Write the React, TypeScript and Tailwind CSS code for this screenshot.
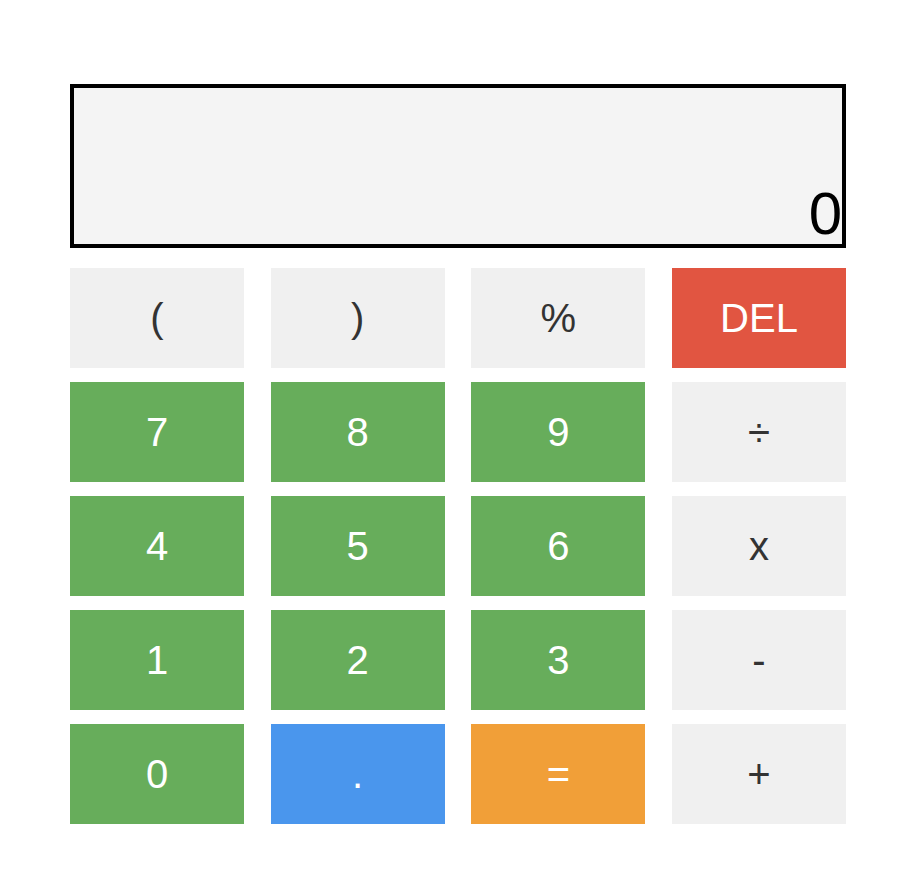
const keys: { label: string; kind: 'op' | 'num' | 'del' | 'dot' | 'eq' }[] = [
  { label: '(', kind: 'op' },
  { label: ')', kind: 'op' },
  { label: '%', kind: 'op' },
  { label: 'DEL', kind: 'del' },
  { label: '7', kind: 'num' },
  { label: '8', kind: 'num' },
  { label: '9', kind: 'num' },
  { label: '÷', kind: 'op' },
  { label: '4', kind: 'num' },
  { label: '5', kind: 'num' },
  { label: '6', kind: 'num' },
  { label: 'x', kind: 'op' },
  { label: '1', kind: 'num' },
  { label: '2', kind: 'num' },
  { label: '3', kind: 'num' },
  { label: '-', kind: 'op' },
  { label: '0', kind: 'num' },
  { label: '.', kind: 'dot' },
  { label: '=', kind: 'eq' },
  { label: '+', kind: 'op' },
]

const styles = {
  op: 'bg-[#f0f0f0] text-[#333333]',
  num: 'bg-[#67ad5b] text-white',
  del: 'bg-[#e15541] text-white',
  dot: 'bg-[#4a96ed] text-white',
  eq: 'bg-[#f19f38] text-white',
}

export default function App() {
  return (
    <div className="min-h-[890px] bg-white pt-[84px] font-['Liberation_Sans',Arial,sans-serif]">
      <div className="mx-auto w-[776px]">
        {/* Display */}
        <div className="flex h-[164px] items-end justify-end border-4 border-black bg-[#f4f4f4]">
          <span className="text-[60px] leading-none text-black">0</span>
        </div>

        {/* Keypad */}
        <div className="mt-5 grid grid-cols-4 gap-x-[26.67px] gap-y-[14px]">
          {keys.map((k) => (
            <button
              key={k.label}
              className={`flex h-[100px] items-center justify-center text-[40px] ${styles[k.kind]}`}
            >
              {k.label}
            </button>
          ))}
        </div>
      </div>
    </div>
  )
}
